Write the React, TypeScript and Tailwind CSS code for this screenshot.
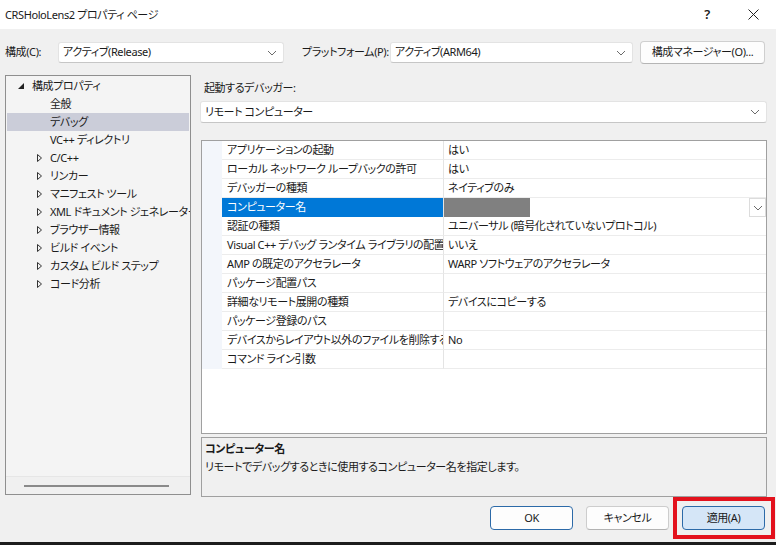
import React from "react";

type TreeItem = { label: string; level: 0 | 1; expander?: "open" | "closed"; selected?: boolean };

const treeItems: TreeItem[] = [
    { label: "構成プロパティ", level: 0, expander: "open" },
    { label: "全般", level: 1 },
    { label: "デバッグ", level: 1, selected: true },
    { label: "VC++ ディレクトリ", level: 1 },
    { label: "C/C++", level: 1, expander: "closed" },
    { label: "リンカー", level: 1, expander: "closed" },
    { label: "マニフェスト ツール", level: 1, expander: "closed" },
    { label: "XML ドキュメント ジェネレーター", level: 1, expander: "closed" },
    { label: "ブラウザー情報", level: 1, expander: "closed" },
    { label: "ビルド イベント", level: 1, expander: "closed" },
    { label: "カスタム ビルド ステップ", level: 1, expander: "closed" },
    { label: "コード分析", level: 1, expander: "closed" },
];

type Prop = { name: string; value?: string; selected?: boolean };

const props: Prop[] = [
    { name: "アプリケーションの起動", value: "はい" },
    { name: "ローカル ネットワーク ループバックの許可", value: "はい" },
    { name: "デバッガーの種類", value: "ネイティブのみ" },
    { name: "コンピューター名", selected: true },
    { name: "認証の種類", value: "ユニバーサル (暗号化されていないプロトコル)" },
    { name: "Visual C++ デバッグ ランタイム ライブラリの配置", value: "いいえ" },
    { name: "AMP の既定のアクセラレータ", value: "WARP ソフトウェアのアクセラレータ" },
    { name: "パッケージ配置パス" },
    { name: "詳細なリモート展開の種類", value: "デバイスにコピーする" },
    { name: "パッケージ登録のパス" },
    { name: "デバイスからレイアウト以外のファイルを削除する", value: "No" },
    { name: "コマンド ライン引数" },
];

function Chevron() {
    return (
        <svg width="10" height="6" viewBox="0 0 10 6" className="shrink-0">
            <path d="M1 1 L5 5 L9 1" fill="none" stroke="#6b6b6b" strokeWidth="1" />
        </svg>
    );
}

function Combo({ text, className }: { text: string; className: string }) {
    return (
        <div className={`flex items-center justify-between bg-white border border-[#e3e3e3] border-b-[#c6c6c6] rounded-[3px] pl-[4px] pr-[6px] ${className}`}>
            <span className="whitespace-nowrap">{text}</span>
            <Chevron />
        </div>
    );
}

export default function App() {
    return (
        <div className="relative w-[776px] h-[545px] overflow-hidden bg-[#f0f0f0] text-[11px] tracking-[-0.4px] text-[#1a1a1a] font-['Noto_Sans','Noto_Sans_CJK_JP',sans-serif] [font-feature-settings:'palt']">
            {/* title bar */}
            <div className="h-[29px] bg-white flex items-center justify-between pl-[5px]">
                <span className="leading-none">CRSHoloLens2 プロパティ ページ</span>
                <div className="flex items-center h-full">
                    <span className="w-[46px] text-center text-[13px] font-semibold">?</span>
                    <div className="w-[46px] flex justify-center">
                        <svg width="11" height="11" viewBox="0 0 11 11">
                            <path d="M0.5 0.5 L10.5 10.5 M10.5 0.5 L0.5 10.5" stroke="#222" strokeWidth="1" />
                        </svg>
                    </div>
                </div>
            </div>

            {/* configuration row */}
            <div className="flex items-center h-[23px] mt-[12px] pl-[5px]">
                <span className="w-[53px] whitespace-nowrap">構成(C):</span>
                <Combo text="アクティブ(Release)" className="w-[226px] h-[21px]" />
                <span className="ml-[18px] w-[88px] whitespace-nowrap">プラットフォーム(P):</span>
                <Combo text="アクティブ(ARM64)" className="w-[243px] h-[21px]" />
                <button className="ml-[7px] w-[125px] h-[23px] rounded-[4px] border border-[#cfcfcf] border-b-[#b5b5b5] bg-[#fdfdfd] whitespace-nowrap">
                    構成マネージャー(O)...
                </button>
            </div>

            {/* main */}
            <div className="flex mt-[11px] h-[422px] pl-[5px]">
                {/* tree */}
                <div className="w-[186px] h-[420px] border border-[#8f8f8f] bg-[#f4f4f4] flex flex-col">
                    <div className="flex-1 pt-[1px] px-[1px] overflow-hidden">
                        {treeItems.map((item) => (
                            <div
                                key={item.label}
                                className={`relative h-[18px] flex items-center whitespace-nowrap ${item.selected ? "bg-[#cbcdd9]" : ""}`}
                            >
                                {item.level === 0 ? (
                                    <>
                                        <svg width="6" height="6" viewBox="0 0 6 6" className="absolute left-[11px] top-[6px]">
                                            <polygon points="6,0 6,6 0,6" fill="#222" />
                                        </svg>
                                        <span className="pl-[25px]">{item.label}</span>
                                    </>
                                ) : (
                                    <>
                                        {item.expander === "closed" && (
                                            <svg width="5" height="8" viewBox="0 0 5 8" className="absolute left-[30px] top-[5px]">
                                                <polygon points="0.5,0.5 4.5,4 0.5,7.5" fill="none" stroke="#333" strokeWidth="1" />
                                            </svg>
                                        )}
                                        <span className="pl-[43px]">{item.label}</span>
                                    </>
                                )}
                            </div>
                        ))}
                    </div>
                    <div className="h-[18px] border-t border-[#e6e6e6] bg-[#f0f0f0] flex items-center pl-[18px]">
                        <div className="w-[145px] h-[2px] bg-[#8a8a8a]" />
                    </div>
                </div>

                {/* right pane */}
                <div className="ml-[9px] w-[567px] flex flex-col">
                    <div className="h-[26px] flex items-center pl-[4px]">起動するデバッガー:</div>
                    <Combo text="リモート コンピューター" className="w-[567px] h-[22px]" />

                    {/* property grid */}
                    <div className="mt-[17px] ml-[1px] w-[566px] h-[294px] border border-[#a0a0a0] bg-white">
                        {props.map((p) => (
                            <div key={p.name} className="flex h-[19px]">
                                <div className="w-[20px] bg-[#f3f6fb]" />
                                <div
                                    className={`w-[222px] pl-[5px] flex items-center overflow-hidden whitespace-nowrap border-r border-[#e4e4e4] ${
                                        p.selected ? "bg-[#0078d7] text-white" : "border-b border-b-[#ececec]"
                                    }`}
                                >
                                    {p.name}
                                </div>
                                <div className={`flex-1 flex items-center whitespace-nowrap ${p.selected ? "" : "border-b border-[#ececec] pl-[4px]"}`}>
                                    {p.selected ? (
                                        <>
                                            <div className="w-[86px] h-full bg-[#808080]" />
                                            <div className="flex-1" />
                                            <div className="w-[17px] h-full bg-white border border-[#dcdcdc] flex items-center justify-center">
                                                <Chevron />
                                            </div>
                                        </>
                                    ) : (
                                        p.value
                                    )}
                                </div>
                            </div>
                        ))}
                    </div>

                    {/* description */}
                    <div className="mt-[3px] ml-[1px] w-[566px] h-[60px] border border-[#a0a0a0] bg-[#f0f0f0] pl-[3px] pt-[2px] leading-[18px]">
                        <div className="font-bold">コンピューター名</div>
                        <div>リモートでデバッグするときに使用するコンピューター名を指定します。</div>
                    </div>
                </div>
            </div>

            {/* footer buttons */}
            <div className="h-[45px] flex justify-end items-start pt-[9px] pr-[11px] gap-[13px]">
                <button className="w-[83px] h-[24px] rounded-[4px] border border-[#2c6aa8] bg-[#fdfdfd]">OK</button>
                <button className="w-[83px] h-[24px] rounded-[4px] border border-[#cdcdcd] border-b-[#b3b3b3] bg-[#fdfdfd]">キャンセル</button>
                <button className="w-[83px] h-[24px] rounded-[4px] border border-[#2c6aa8] bg-[#d5e6f7]">適用(A)</button>
            </div>
            <div className="h-[3px] bg-[#1c1c1c]" />

            {/* annotation */}
            <div className="absolute left-[673px] top-[497px] w-[102px] h-[42px] border-[4px] border-[#e3121d]" />
        </div>
    );
}
